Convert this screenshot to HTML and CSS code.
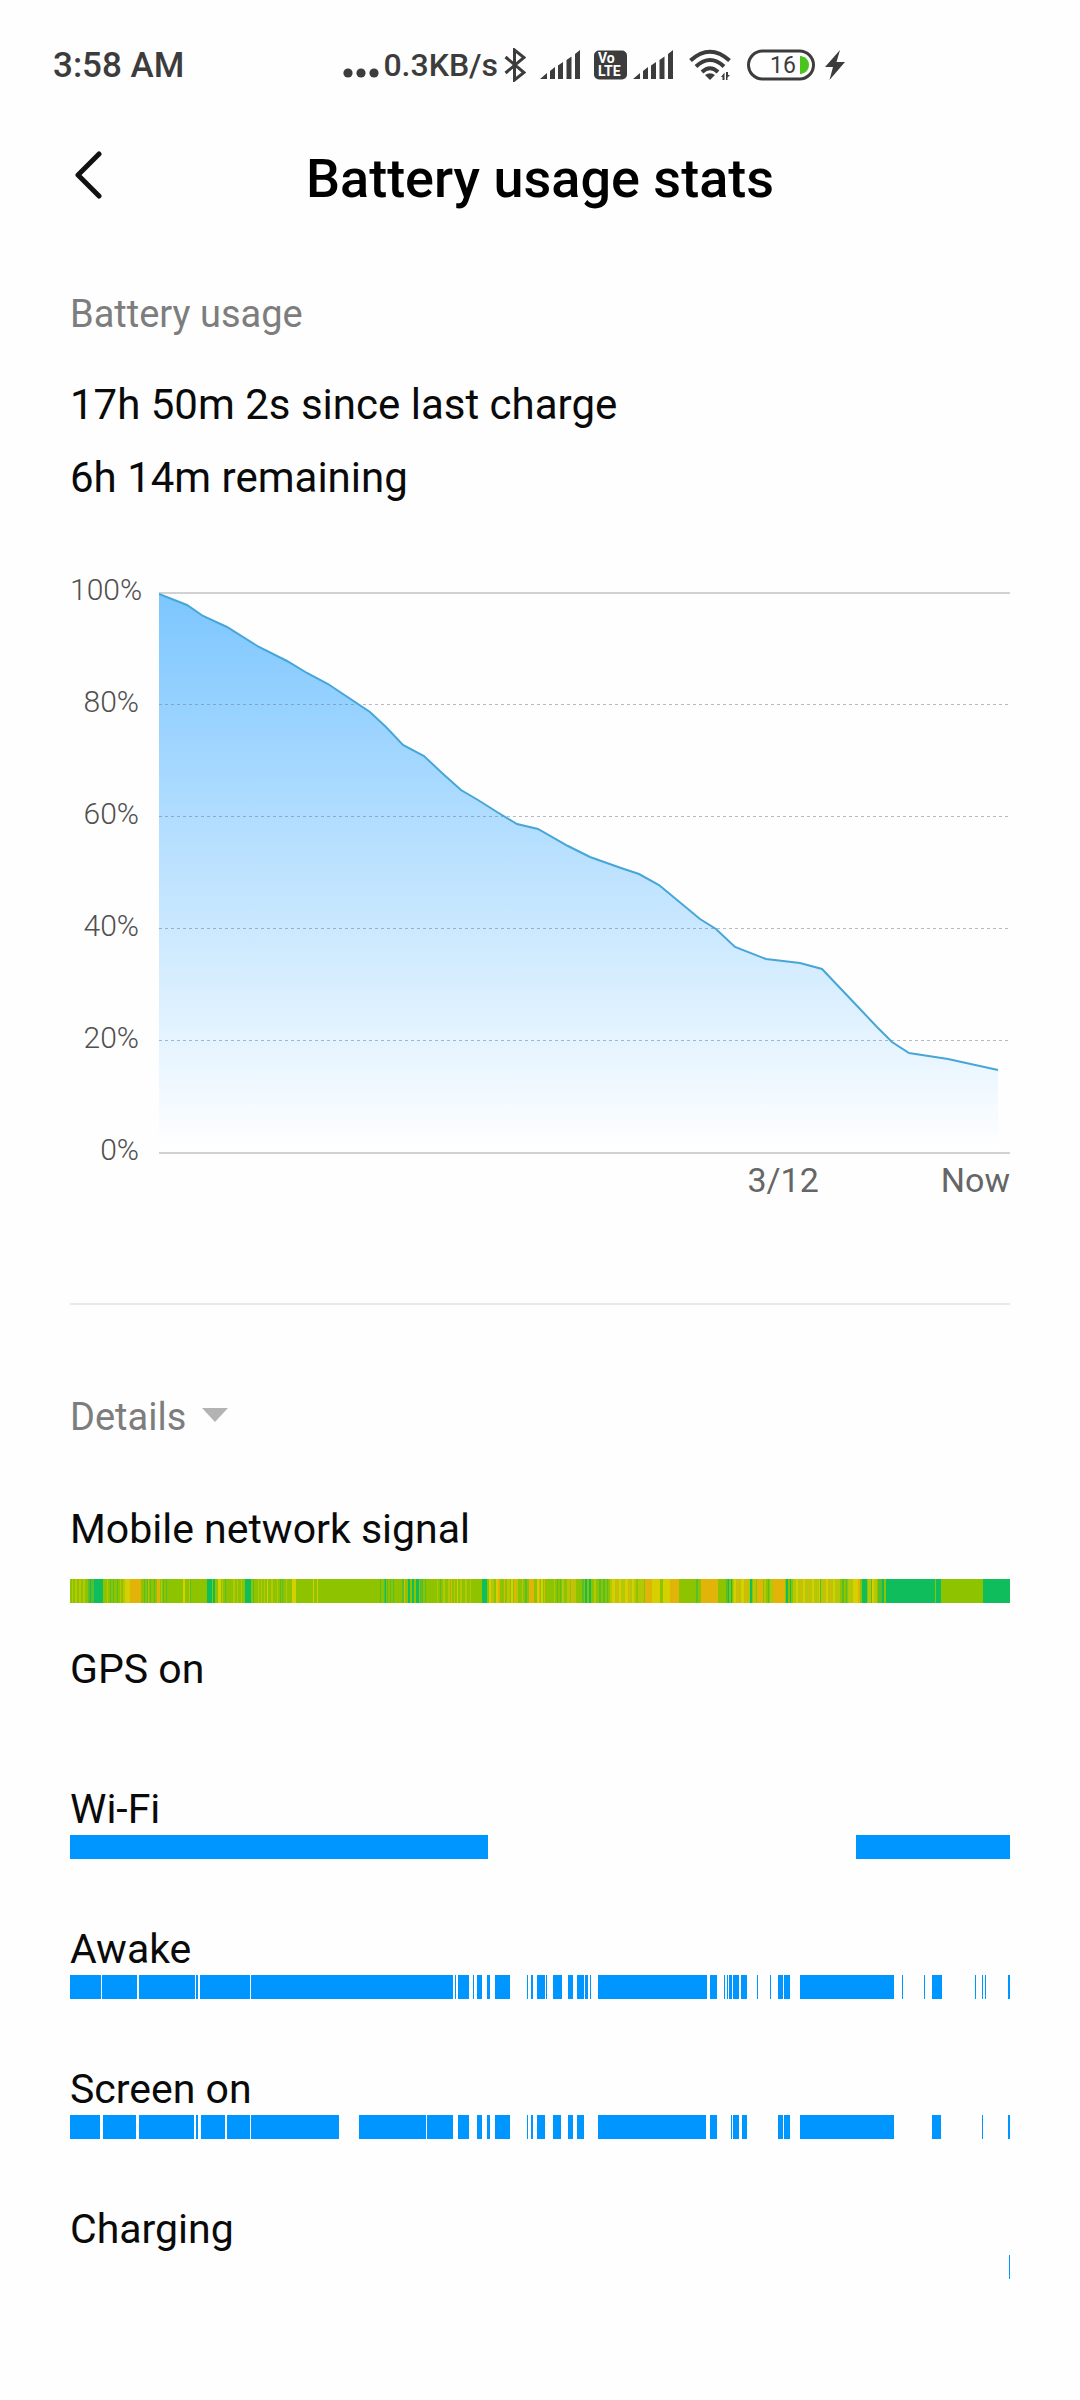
FILE: index.html
```
<!DOCTYPE html>
<html lang="en">

<head>
  <meta charset="UTF-8">
  <meta name="viewport" content="width=device-width, initial-scale=1.0">
  <title>Battery usage stats</title>
  <link rel="stylesheet" href="styles.css">
</head>

<body>
  <div class="status-bar">
    <span class="time">3:58 AM</span>
    <div class="status-icons">
      <svg class="dots" width="36" height="30" viewBox="0 0 36 30">
        <circle cx="5" cy="23" r="4.6" />
        <circle cx="18" cy="23" r="4.6" />
        <circle cx="31" cy="23" r="4.6" />
      </svg>
      <span class="speed">0.3KB/s</span>
      <svg class="bluetooth" width="22" height="34" viewBox="0 0 22 34">
        <path d="M1.500 9L20 24.500L10.500 32V2L20 9.500L1.500 25" />
      </svg>
      <svg class="signal" width="40" height="30" viewBox="0 0 40 30">
        <path d="M0 29L7 23V29ZM10 21L15 17V29H10ZM18 15.500L23 12V29H18ZM26.500 10L31.500 6.500V29H26.500ZM35 4L40 0V29H35Z" />
      </svg>
      <svg class="volte" width="34" height="30" viewBox="0 0 34 30">
        <rect width="33" height="29" y="0.500" rx="5" />
        <text x="4" y="13">Vo</text>
        <text x="4" y="26">LTE</text>
      </svg>
      <svg class="signal" width="40" height="30" viewBox="0 0 40 30">
        <path d="M0 29L7 23V29ZM10 21L15 17V29H10ZM18 15.500L23 12V29H18ZM26.500 10L31.500 6.500V29H26.500ZM35 4L40 0V29H35Z" />
      </svg>
      <svg class="wifi" width="42" height="32" viewBox="0 0 42 32">
        <path class="wave" d="M1.500 11.500Q21 -6 40.500 11.500M7 17.500Q21 4.500 35 17.500M13 23Q21 15.500 29 23" />
        <path d="M16 26Q21 22.500 26 26L21 31Z" />
        <path d="M32 28L35.500 23.500V31H33.500V28ZM37 23V31H38.500V28.500L41 26H39V23Z" />
      </svg>
      <svg class="battery" width="68" height="32" viewBox="0 0 68 32">
        <rect x="1.500" y="2" width="65" height="28" rx="14" />
        <path d="M53 7H54Q62 9 62 16T54 25H53Z" />
        <text x="23" y="24">16</text>
      </svg>
      <svg class="bolt" width="20" height="30" viewBox="0 0 20 30">
        <path d="M15 0L0 17H8L4.500 30L20 12H11.500Z" />
      </svg>
    </div>
  </div>

  <header class="header">
    <button class="back" type="button" aria-label="Back">
      <svg width="30" height="50" viewBox="0 0 30 50">
        <path d="M27 4L6 25L27 46" />
      </svg>
    </button>
    <h1>Battery usage stats</h1>
  </header>

  <main>
    <h2 class="section-title">Battery usage</h2>
    <p class="summary">17h 50m 2s since last charge</p>
    <p class="summary">6h 14m remaining</p>

    <div class="chart">
      <div class="y-axis">
        <span>100%</span>
        <span>80%</span>
        <span>60%</span>
        <span>40%</span>
        <span>20%</span>
        <span>0%</span>
      </div>
      <div class="plot">
        <svg viewBox="0 0 851 562" preserveAspectRatio="none">
          <defs>
            <linearGradient id="fill" x1="0" y1="0" x2="0" y2="1">
              <stop offset="0" stop-color="#7cc6ff" />
              <stop offset="1" stop-color="#fff" />
            </linearGradient>
          </defs>
          <path class="axis" d="M0 1H851M0 561H851" />
          <path fill="url(#fill)"
            d="M0 2L28 13L44 24L68 35L100 55L128 69L148 81L169 92L211 120L227 135L244 153L265 164L283 181L302 198L319 208L338 220L358 232L379 237L409 254L431 265L462 276L480 282L500 293L541 327L557 337L576 355L607 367L641 371L663 377L701 417L718 435L733 450L750 461L789 467L839 478V560H0Z" />
          <path class="grid" d="M0 112.500H849M0 224.500H849M0 336.500H849M0 448.500H849" />
          <path class="line"
            d="M0 2L28 13L44 24L68 35L100 55L128 69L148 81L169 92L211 120L227 135L244 153L265 164L283 181L302 198L319 208L338 220L358 232L379 237L409 254L431 265L462 276L480 282L500 293L541 327L557 337L576 355L607 367L641 371L663 377L701 417L718 435L733 450L750 461L789 467L839 478" />
        </svg>
        <div class="x-axis">
          <span>3/12</span>
          <span>Now</span>
        </div>
      </div>
    </div>

    <hr>

    <button class="section-title details" type="button">Details
      <svg width="26" height="14" viewBox="0 0 26 14">
        <path d="M0 0H26L13 14Z" />
      </svg>
    </button>

    <section class="row row-signal">
      <h3>Mobile network signal</h3>
      <svg class="bar" id="signal" viewBox="0 0 940 24" preserveAspectRatio="none"></svg>
    </section>
    <section class="row">
      <h3>GPS on</h3>
      <svg class="bar" id="gps" viewBox="0 0 940 24" preserveAspectRatio="none"></svg>
    </section>
    <section class="row">
      <h3>Wi-Fi</h3>
      <svg class="bar" id="wifi" viewBox="0 0 940 24" preserveAspectRatio="none"></svg>
    </section>
    <section class="row">
      <h3>Awake</h3>
      <svg class="bar" id="awake" viewBox="0 0 940 24" preserveAspectRatio="none"></svg>
    </section>
    <section class="row">
      <h3>Screen on</h3>
      <svg class="bar" id="screen" viewBox="0 0 940 24" preserveAspectRatio="none"></svg>
    </section>
    <section class="row">
      <h3>Charging</h3>
      <svg class="bar" id="charging" viewBox="0 0 940 24" preserveAspectRatio="none"></svg>
    </section>
  </main>
  <script src="script.js"></script>
</body>

</html>
```
FILE: styles.css
```
* {
  box-sizing: border-box;
}

body {
  margin: 0;
  background: #fefefe;
  color: #0a0a0a;
  font-family: Roboto, sans-serif;
}

h1,
h2,
h3,
p {
  margin: 0;
  font-weight: 400;
}

button {
  padding: 0;
  border: 0;
  background: none;
  font-family: inherit;
  cursor: pointer;
}

svg {
  display: block;
  flex: none;
}

/* status bar */
.status-bar {
  display: flex;
  align-items: center;
  height: 130px;
  padding-left: 53px;
  gap: 159px;
  color: #3c3c3c;
  fill: #3c3c3c;
  font-size: 35px;
  font-weight: 500;
  white-space: nowrap;
}

.status-icons {
  display: flex;
  align-items: center;
  gap: 14px;
}

.dots {
  margin-right: -10px;
}

.speed {
  margin-right: -8px;
  font-size: 32px;
}

.bluetooth {
  fill: none;
  stroke: #3c3c3c;
  stroke-width: 3;
}

.volte {
  margin-right: -9px;
}

.volte text {
  fill: #fff;
  font-size: 14px;
  font-weight: 700;
}

.wifi {
  margin-left: 2px;
}

.wave {
  fill: none;
  stroke: #3c3c3c;
  stroke-width: 4;
}

.battery {
  margin-left: 2px;
}

.battery rect {
  fill: none;
  stroke: #3c3c3c;
  stroke-width: 3;
}

.battery path {
  fill: #4cc41e;
}

.battery text {
  font-size: 23px;
  font-weight: 400;
}

.bolt {
  margin-left: -4px;
}

/* header */
.header {
  display: grid;
  grid-template-columns: 1fr auto 1fr;
  align-items: center;
  height: 96px;
  padding: 0 72px;
}

.header h1 {
  color: #000;
  font-size: 54px;
  font-weight: 500;
}

.back {
  justify-self: start;
  padding-bottom: 6px;
}

.back path {
  fill: none;
  stroke: #111;
  stroke-width: 5;
  stroke-linecap: round;
  stroke-linejoin: round;
}

main {
  padding: 64px 70px 55px;
}

.section-title {
  margin-bottom: 30px;
  color: #7d7d7d;
  font-size: 38px;
  line-height: 48px;
}

.summary {
  font-size: 42px;
  line-height: 73px;
}

/* chart */
.chart {
  display: flex;
  margin-top: 58px;
  color: #666;
}

.y-axis {
  display: flex;
  flex-direction: column;
  justify-content: space-between;
  width: 89px;
  height: 596px;
  padding-right: 20px;
  color: #505050;
  font-size: 30px;
  font-weight: 300;
  line-height: 36px;
  text-align: right;
}

.plot {
  flex: 1;
  padding-top: 20px;
}

.plot svg {
  width: 100%;
  height: 562px;
}

.plot path {
  vector-effect: non-scaling-stroke;
}

.axis {
  stroke: #d2d2d2;
  stroke-width: 2;
}

.grid {
  stroke: #667788;
  stroke-opacity: 0.5;
  stroke-dasharray: 3 3;
}

.line {
  fill: none;
  stroke: #46a6d8;
  stroke-width: 2;
}

.x-axis {
  display: flex;
  justify-content: flex-end;
  gap: 122px;
  margin-top: 6px;
  font-size: 34px;
  line-height: 40px;
}

hr {
  height: 2px;
  margin: 103px 0 88px;
  border: 0;
  background: #e8e8e8;
}

/* details */
.details {
  display: flex;
  align-items: center;
  gap: 16px;
  margin-bottom: 64px;
}

.details svg {
  margin-bottom: 4px;
  fill: #b3b3b3;
}

.row {
  height: 140px;
}

.row h3 {
  font-size: 41px;
  line-height: 48px;
}

.bar {
  width: 100%;
  height: 24px;
  margin-top: 2px;
  fill: #0096ff;
}

.row-signal .bar {
  margin-top: 26px;
}

.bar .good {
  fill: #0fbd5c;
}

.bar .fair {
  fill: #58bf2c;
}

.bar .ok {
  fill: #8ec300;
}

.bar .low {
  fill: #b5c808;
}

.bar .weak {
  fill: #d6d000;
}

.bar .poor {
  fill: #e2b40a;
}
```
FILE: script.js
```
// active periods, [start, end]
const bars = {
  wifi: [[0, 418], [786, 940]],
  awake: [
    [0, 31], [32, 67], [69, 125], [126, 128], [130, 180], [181, 383], [385, 386], [388, 399],
    [403, 404], [407, 412], [417, 420], [425, 440], [457, 458], [461, 463], [467, 475], [476, 477],
    [483, 492], [498, 503], [507, 514], [515, 518], [520, 521], [528, 637], [640, 647], [654, 655],
    [657, 658], [659, 662], [663, 669], [671, 677], [687, 688], [700, 701], [708, 713], [714, 720],
    [730, 824], [832, 833], [854, 855], [862, 872], [905, 906], [912, 913], [915, 916], [938, 940]
  ],
  screen: [
    [0, 30], [33, 66], [69, 124], [126, 128], [131, 155], [157, 180], [181, 269], [289, 356],
    [357, 383], [388, 399], [407, 412], [417, 420], [425, 440], [457, 458], [461, 463], [467, 475],
    [483, 491], [498, 503], [507, 514], [528, 636], [640, 647], [661, 662], [663, 669], [672, 677],
    [708, 713], [714, 720], [730, 824], [862, 871], [912, 913], [938, 940]
  ],
  charging: [[939, 940]]
}

// signal strength changes, drawn over the "ok" level
const signal = {
  ok: [[0, 940]],
  low: [
    [2, 3], [5, 7], [9, 11], [13, 15], [37, 38], [50, 51], [53, 55], [78, 79], [91, 92], [119, 120],
    [152, 153], [163, 165], [167, 168], [171, 172], [188, 189], [191, 192], [194, 195], [201, 203],
    [207, 208], [216, 217], [367, 368], [373, 375], [378, 380], [384, 385], [390, 392], [395, 397],
    [400, 401], [421, 424], [437, 440], [446, 448], [452, 453], [484, 485], [492, 494], [497, 500],
    [503, 506], [524, 526], [540, 566], [568, 574], [663, 680], [683, 686], [694, 696], [700, 703],
    [723, 770], [778, 783], [798, 801], [804, 807]
  ],
  fair: [
    [18, 24], [40, 41], [43, 44], [47, 48], [74, 75], [77, 78], [80, 81], [84, 85], [93, 94],
    [96, 97], [120, 121], [155, 156], [183, 184], [210, 211], [212, 213], [310, 311], [314, 315],
    [317, 318], [320, 321], [323, 324], [332, 334], [350, 353], [355, 356], [370, 371], [455, 457],
    [487, 488], [490, 491], [512, 514], [529, 531], [533, 535], [537, 538], [626, 628], [656, 658],
    [698, 699], [750, 751], [772, 774], [776, 777], [801, 802], [808, 812]
  ],
  weak: [
    [55, 60], [113, 115], [148, 151], [197, 198], [222, 226], [243, 244], [247, 248], [387, 388],
    [419, 421], [426, 428], [441, 443], [467, 469], [471, 473], [542, 545], [549, 551], [555, 558],
    [562, 564], [582, 590], [593, 600], [664, 666], [671, 674], [726, 728], [733, 735], [742, 744],
    [749, 750], [756, 758], [763, 765], [783, 788], [802, 804]
  ],
  poor: [
    [60, 71], [87, 90], [334, 335], [381, 382], [428, 430], [434, 435], [444, 446], [459, 464],
    [469, 470], [474, 475], [501, 503], [546, 547], [559, 560], [575, 582], [600, 609], [631, 648],
    [667, 669], [675, 677], [687, 693], [703, 715], [730, 731], [738, 739], [754, 755], [760, 761],
    [788, 790]
  ],
  good: [
    [20, 21], [24, 33], [137, 142], [143, 145], [175, 181], [315, 316], [338, 340], [342, 344],
    [346, 349], [412, 417], [515, 517], [519, 521], [658, 659], [661, 662], [680, 682], [716, 718],
    [720, 721], [792, 797], [812, 814], [816, 865], [866, 871], [913, 940]
  ]
}

function drawPeriods(id, periods, level) {
  const svg = document.getElementById(id)
  for (const [start, end] of periods) {
    const rect = document.createElementNS('http://www.w3.org/2000/svg', 'rect')
    rect.setAttribute('x', start)
    rect.setAttribute('width', end - start)
    rect.setAttribute('height', 24)
    if (level) rect.setAttribute('class', level)
    svg.appendChild(rect)
  }
}

for (const id in bars) {
  drawPeriods(id, bars[id])
}

for (const level in signal) {
  drawPeriods('signal', signal[level], level)
}
```
